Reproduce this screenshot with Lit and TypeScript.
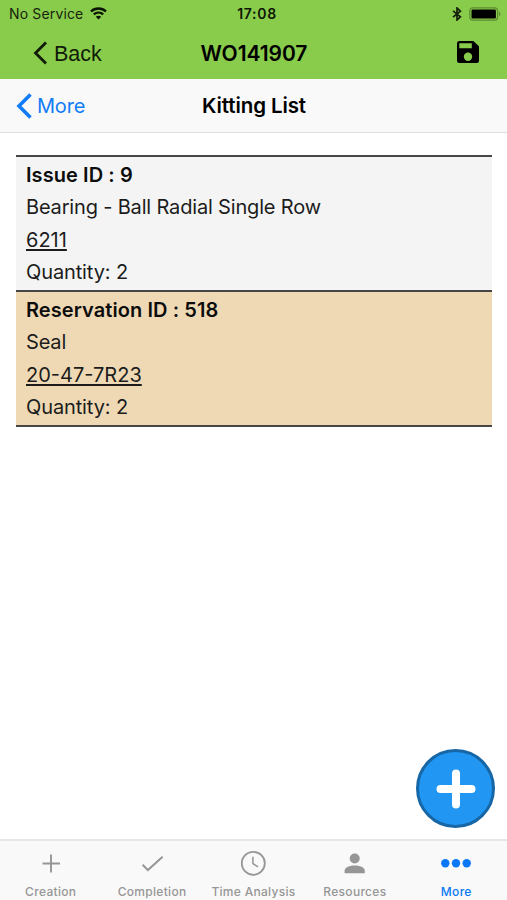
import { LitElement, html, svg, css } from "lit";
import { customElement, property } from "lit/decorators.js";

const icons: Record<string, unknown> = {
  creation: svg`<path d="M15 6.500v18M6.500 15.500h17.500" stroke="currentColor" stroke-width="1.900" fill="none"/>`,
  completion: svg`<path d="M5.600 16.700l5.300 5.400L25.600 8.700" stroke="currentColor" stroke-width="2" fill="none"/>`,
  time: svg`<circle cx="15.300" cy="15.300" r="11.500" stroke="currentColor" stroke-width="1.800" fill="none"/><path d="M14.900 8.700v7l5.200 3.200" stroke="currentColor" stroke-width="1.500" fill="none"/>`,
  resources: svg`<circle cx="14.700" cy="10.500" r="5"/><path d="M4.600 25.300v-2.600c0-3.300 5.400-5.200 10.100-5.200s10.100 1.900 10.100 5.200V25.300z"/>`,
  more: svg`<circle cx="4.300" cy="15.300" r="4.200"/><circle cx="15" cy="15.300" r="4.200"/><circle cx="25.700" cy="15.300" r="4.200"/>`,
};

@customElement("kit-item")
export class KitItem extends LitElement {
  @property() heading = "";
  @property() description = "";
  @property() part = "";
  @property({ type: Number }) quantity = 0;

  static styles = css`
    :host {
      display: block;
      box-sizing: border-box;
      padding: 2px 9px 3px 10px;
      border-bottom: 2px solid #484644;
      font-size: 20px;
      line-height: 32.300px;
      color: #1c1c1c;
      height: 135px;
    }
    .row { height: 32.300px; white-space: nowrap; }
    .heading { font-weight: 600; color: #0d0d0d; letter-spacing: 0.080px; }
    .description { letter-spacing: -0.170px; }
    .part { letter-spacing: 0; }
    .part span { text-decoration: underline; text-decoration-thickness: 1.500px; text-underline-offset: 2px; text-decoration-skip-ink: none; }
    .quantity { letter-spacing: -0.120px; }
  `;

  render() {
    return html`
      <div class="row heading">${this.heading}</div>
      <div class="row description">${this.description}</div>
      <div class="row part"><span>${this.part}</span></div>
      <div class="row quantity">Quantity: ${this.quantity}</div>
    `;
  }
}

@customElement("tab-item")
export class TabItem extends LitElement {
  @property() label = "";
  @property() icon = "";

  static styles = css`
    :host { display: flex; flex-direction: column; align-items: center; color: #969696; }
    .icon { display: block; width: 30px; height: 30px; margin-top: 7px; fill: currentColor; }
    .label { margin-top: 6px; font-size: 12px; line-height: 16px; font-weight: 500; letter-spacing: 0.300px; white-space: nowrap; }
  `;

  render() {
    return html`
      <svg class="icon" viewBox="0 0 30 30">${icons[this.icon]}</svg>
      <span class="label">${this.label}</span>
    `;
  }
}

@customElement("app-root")
export class AppRoot extends LitElement {
  static styles = css`
    :host {
      display: flex;
      flex-direction: column;
      position: relative;
      height: 900px;
      overflow: hidden;
      background: #fff;
      color: #000;
      font-family: Inter, "Liberation Sans", sans-serif;
    }
    svg { display: block; }
    .top { height: 79px; background: #89cb4b; }
    .status, .bar { display: grid; grid-template-columns: 1fr auto 1fr; align-items: center; }
    .status { height: 27px; font-size: 14px; color: #17240b; }
    .carrier { display: flex; align-items: center; gap: 7px; padding-left: 9px; letter-spacing: 0.150px; }
    .time { font-weight: 600; color: #0d1605; letter-spacing: 0.700px; padding-left: 7px; }
    .power { display: flex; align-items: center; justify-content: flex-end; gap: 7px; padding-right: 6px; }
    .header { height: 52px; }
    .title { font-size: 20.500px; font-weight: 600; letter-spacing: -0.100px; padding-left: 1px; }
    .order { font-size: 21px; letter-spacing: -0.050px; }
    .back { display: flex; align-items: center; gap: 7px; padding: 0 0 0 33px; font: 21.500px "Liberation Sans", sans-serif; color: #111b08; }
    .back span { padding-top: 2px; }
    .save { justify-self: end; margin: 0 27px 2px 0; }
    .sub { height: 53px; background: #f9f9f9; border-bottom: 1px solid #dedede; }
    .link { display: flex; align-items: center; gap: 5px; padding-left: 16px; font-size: 20px; color: #117cf6; letter-spacing: -0.200px; }
    .content { flex: 1; padding: 22px 15px 0 16px; }
    .list { border-top: 2px solid #484644; }
    .issue { background: #f4f4f4; }
    .reservation { background: #efd9b5; }
    .add {
      position: absolute; right: 12px; bottom: 72px; width: 79px; height: 79px;
      box-sizing: border-box; padding: 0; border: 3px solid #1766a6; border-radius: 50%;
      background: #2196f3; display: grid; place-items: center;
    }
    .tabs { box-sizing: border-box; height: 61px; display: grid; grid-template-columns: repeat(5, 1fr); background: #f9f9f9; border-top: 2px solid #e6e6e6; }
    .active { color: #0a78f5; }
  `;

  render() {
    return html`
      <header class="top">
        <div class="status">
          <div class="carrier">
            <span>No Service</span>
            <svg width="17" height="13" viewBox="0 0 17 13" fill="none" stroke="#0b1304" stroke-width="2.300">
              <path d="M1 4.500C5.200.500 11.800.500 16 4.500M3.800 7.400c2.700-2.500 6.700-2.500 9.400 0"/>
              <path d="M5.800 9.700c1.600-1.400 3.800-1.400 5.400 0L8.500 12.500z" fill="#0b1304" stroke="none"/>
            </svg>
          </div>
          <span class="time">17:08</span>
          <div class="power">
            <svg width="10" height="14" viewBox="0 0 10 14" fill="none" stroke="#14200a" stroke-width="1.700">
              <path d="M1 3.800l7.400 6.100L5 13V1l3.400 3.100L1 10.200"/>
            </svg>
            <svg width="32" height="14" viewBox="0 0 32 14">
              <rect x=".8" y=".8" width="27.800" height="12.400" rx="3" fill="none" stroke="#5d8b32" stroke-width="1.200"/>
              <rect x="2.500" y="2.500" width="24.400" height="9" rx="1.300"/>
              <path d="M30 4.800c1.800.6 1.800 3.800 0 4.400z" fill="#5d8b32"/>
            </svg>
          </div>
        </div>
        <div class="bar header">
          <div class="back">
            <svg width="14" height="24" viewBox="0 0 14 24" fill="none" stroke="#111b08" stroke-width="2.800"><path d="M13 1.500L2.500 12 13 22.500"/></svg>
            <span>Back</span>
          </div>
          <span class="title order">WO141907</span>
          <svg class="save" width="24" height="24" viewBox="0 0 24 24">
            <path fill-rule="evenodd" d="M3.500 1H17.300L23 6.200V20.500Q23 23 20.500 23H3.500Q1 23 1 20.500V3.500Q1 1 3.500 1zM3.300 3.300V8.300H15.800V3.300zM12 12.500a4.200 4.200 0 1 0 0 8.400a4.200 4.200 0 1 0 0-8.400z"/>
          </svg>
        </div>
      </header>
      <nav class="bar sub">
        <div class="link">
          <svg width="16" height="26" viewBox="0 0 16 26" fill="none" stroke="currentColor" stroke-width="3.600"><path d="M14.500 1.500L3 13l11.500 11.500"/></svg>
          <span>More</span>
        </div>
        <span class="title">Kitting List</span>
      </nav>
      <main class="content">
        <div class="list">
          <kit-item class="issue" heading="Issue ID : 9" description="Bearing - Ball Radial Single Row" part="6211" quantity="2"></kit-item>
          <kit-item class="reservation" heading="Reservation ID : 518" description="Seal" part="20-47-7R23" quantity="2"></kit-item>
        </div>
      </main>
      <button class="add" aria-label="Add">
        <svg width="40" height="40" viewBox="0 0 40 40" stroke="#fff" stroke-width="8" stroke-linecap="round"><path d="M20 4.500v31M4.500 20h31"/></svg>
      </button>
      <footer class="tabs">
        <tab-item icon="creation" label="Creation"></tab-item>
        <tab-item icon="completion" label="Completion"></tab-item>
        <tab-item icon="time" label="Time Analysis"></tab-item>
        <tab-item icon="resources" label="Resources"></tab-item>
        <tab-item class="active" icon="more" label="More"></tab-item>
      </footer>
    `;
  }
}
